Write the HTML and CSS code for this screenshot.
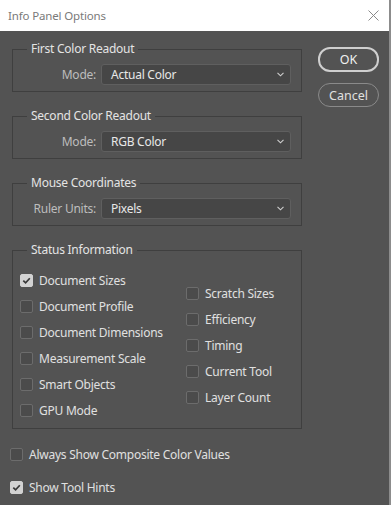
FILE: index.html
```html
<!DOCTYPE html>
<html lang="en">
<head>
<meta charset="UTF-8">
<meta name="viewport" content="width=device-width, initial-scale=1.0">
<title>Info Panel Options</title>
<link rel="stylesheet" href="styles.css">
</head>
<body>
    <div class="window">
        <div class="titlebar">
            <span class="title">Info Panel Options</span>
            <svg class="close" width="11" height="11" viewBox="0 0 11 11">
                <path d="M0.5 0.5 L10.5 10.5 M10.5 0.5 L0.5 10.5" stroke="#8a8a8a" stroke-width="1" fill="none"/>
            </svg>
        </div>

        <div class="content">
            <div class="main">
                <fieldset class="group">
                    <legend>First Color Readout</legend>
                    <div class="field">
                        <span class="fieldLabel">Mode:</span>
                        <div class="select">
                            <span>Actual Color</span>
                            <svg class="chevron" width="7" height="5" viewBox="0 0 7 5"><path d="M0.5 0.8 L3.5 3.8 L6.5 0.8" stroke="#cfcfcf" stroke-width="1.1" fill="none"/></svg>
                        </div>
                    </div>
                </fieldset>

                <fieldset class="group">
                    <legend>Second Color Readout</legend>
                    <div class="field">
                        <span class="fieldLabel">Mode:</span>
                        <div class="select">
                            <span>RGB Color</span>
                            <svg class="chevron" width="7" height="5" viewBox="0 0 7 5"><path d="M0.5 0.8 L3.5 3.8 L6.5 0.8" stroke="#cfcfcf" stroke-width="1.1" fill="none"/></svg>
                        </div>
                    </div>
                </fieldset>

                <fieldset class="group">
                    <legend>Mouse Coordinates</legend>
                    <div class="field">
                        <span class="fieldLabel">Ruler Units:</span>
                        <div class="select">
                            <span>Pixels</span>
                            <svg class="chevron" width="7" height="5" viewBox="0 0 7 5"><path d="M0.5 0.8 L3.5 3.8 L6.5 0.8" stroke="#cfcfcf" stroke-width="1.1" fill="none"/></svg>
                        </div>
                    </div>
                </fieldset>

                <fieldset class="group status">
                    <legend>Status Information</legend>
                    <div class="statusGrid">
                        <div class="column">
                            <div class="check checked"><span class="box"></span>Document Sizes</div>
                            <div class="check"><span class="box"></span>Document Profile</div>
                            <div class="check"><span class="box"></span>Document Dimensions</div>
                            <div class="check"><span class="box"></span>Measurement Scale</div>
                            <div class="check"><span class="box"></span>Smart Objects</div>
                            <div class="check"><span class="box"></span>GPU Mode</div>
                        </div>
                        <div class="column right">
                            <div class="check"><span class="box"></span>Scratch Sizes</div>
                            <div class="check"><span class="box"></span>Efficiency</div>
                            <div class="check"><span class="box"></span>Timing</div>
                            <div class="check"><span class="box"></span>Current Tool</div>
                            <div class="check"><span class="box"></span>Layer Count</div>
                        </div>
                    </div>
                </fieldset>

                <div class="extraChecks">
                    <div class="check"><span class="box"></span>Always Show Composite Color Values</div>
                    <div class="check checked"><span class="box"></span>Show Tool Hints</div>
                </div>
            </div>

            <div class="buttons">
                <button class="btn ok">OK</button>
                <button class="btn">Cancel</button>
            </div>
        </div>
    </div>
</body>
</html>
```

FILE: styles.css
```css
body {
    margin: 0;
    background-color: #535353;
    font-family: "Noto Sans", "Open Sans", sans-serif;
    font-size: 12px;
    letter-spacing: -0.25px;
}

.window {
    width: 389px;
    height: 505px;
    border-right: 2px solid #8c8c8c;
    background-color: #535353;
}

.titlebar {
    height: 31px;
    display: flex;
    align-items: center;
    justify-content: space-between;
    padding: 0 10px 0 8px;
    background-color: #ffffff;
}

.title {
    color: #7a7a7a;
    font-size: 11.5px;
    letter-spacing: -0.15px;
}

.close {
    margin-top: -1px;
}

.content {
    display: flex;
}

.main {
    width: 290px;
    padding: 10px 0 0 12px;
}

.group {
    margin: 0 0 16px 0;
    padding: 7px 10px 6px 0;
    border: 1px solid #3f3f3f;
    min-width: 0;
}

.group legend {
    margin-left: 14px;
    padding: 0 4px;
    line-height: 16px;
    color: #e4e4e4;
}

.field {
    display: flex;
    align-items: center;
    margin-left: 18px;
}

.fieldLabel {
    width: 65px;
    padding-right: 5px;
    text-align: right;
    color: #bdbdbd;
    white-space: nowrap;
}

.select {
    flex: 1;
    height: 19px;
    display: flex;
    align-items: center;
    justify-content: space-between;
    padding: 0 6px 0 9px;
    border: 1px solid #5f5f5f;
    border-radius: 3px;
    background-color: #464646;
    color: #e8e8e8;
}

.status {
    margin-bottom: 12px;
    padding: 9px 0 5px 0;
}

.statusGrid {
    display: flex;
    padding-left: 7px;
}

.column {
    width: 166px;
    flex-shrink: 0;
}

.column.right {
    width: auto;
    padding-top: 13px;
}

.check {
    height: 26px;
    display: flex;
    align-items: center;
    color: #e0e0e0;
    white-space: nowrap;
}

.box {
    width: 11px;
    height: 11px;
    margin-right: 6px;
    border: 1px solid #6c6c6c;
    border-radius: 2px;
    background-color: #4b4b4b;
    flex-shrink: 0;
}

.check.checked .box {
    border-color: #d2d2d2;
    background-color: #d2d2d2;
    background-image: url("data:image/svg+xml,%3Csvg xmlns='http://www.w3.org/2000/svg' width='11' height='11' viewBox='0 0 11 11'%3E%3Cpath d='M2.3 5.6 L4.6 7.8 L8.8 3.2' stroke='%23383838' stroke-width='1.7' fill='none'/%3E%3C/svg%3E");
}

.extraChecks {
    display: flex;
    flex-direction: column;
    gap: 7px;
    margin-left: -2px;
}

.buttons {
    display: flex;
    flex-direction: column;
    gap: 11px;
    margin-left: 16px;
    padding-top: 16px;
}

.btn {
    width: 61px;
    height: 24px;
    border: 1px solid #8a8a8a;
    border-radius: 12px;
    background-color: transparent;
    color: #e0e0e0;
    font-family: "Noto Sans", "Open Sans", sans-serif;
    font-size: 12.5px;
    padding: 0;
}

.btn.ok {
    height: 25px;
    border: 2px solid #cfcfcf;
    color: #f0f0f0;
}
```
